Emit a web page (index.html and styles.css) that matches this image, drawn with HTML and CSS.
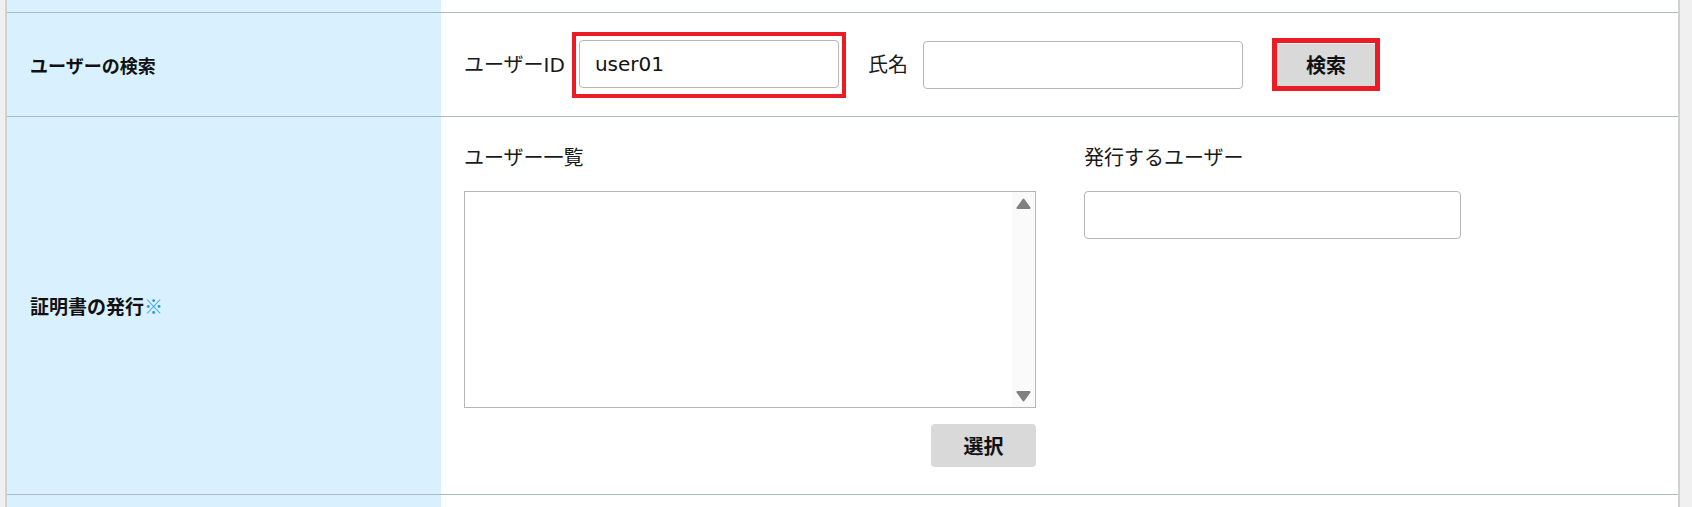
FILE: index.html
```html
<!DOCTYPE html>
<html lang="ja">
<head>
<meta charset="utf-8">
<title>証明書の発行</title>
<link rel="stylesheet" href="styles.css">
</head>
<body>
<div class="page">
  <div class="edge-left"></div>
  <div class="main">
    <div class="row row-top">
      <div class="th"></div>
      <div class="td"></div>
    </div>
    <div class="row row-search">
      <div class="th">ユーザーの検索</div>
      <div class="td search">
        <label class="lbl lbl-id">ユーザーID</label>
        <span class="hl">
          <input class="field field-id" type="text" value="user01">
        </span>
        <label class="lbl lbl-name">氏名</label>
        <input class="field field-name" type="text" value="">
        <button class="btn btn-search">検索</button>
      </div>
    </div>
    <div class="row row-issue">
      <div class="th">証明書の発行<span class="mark">※</span></div>
      <div class="td issue">
        <div class="col col-list">
          <div class="lbl col-title">ユーザー一覧</div>
          <div class="listbox">
            <div class="list-body"></div>
            <div class="list-scroll">
              <svg class="arrow" width="15" height="12" viewBox="0 0 15 12"><path d="M7.5 1.5 L13.6 10 L1.4 10 Z" fill="#808080" stroke="#808080" stroke-width="2" stroke-linejoin="round"/></svg>
              <svg class="arrow" width="15" height="12" viewBox="0 0 15 12"><path d="M7.5 10.5 L13.6 2 L1.4 2 Z" fill="#808080" stroke="#808080" stroke-width="2" stroke-linejoin="round"/></svg>
            </div>
          </div>
          <div class="btn-row">
            <button class="btn btn-select">選択</button>
          </div>
        </div>
        <div class="col col-target">
          <div class="lbl col-title">発行するユーザー</div>
          <input class="field field-target" type="text" value="">
        </div>
      </div>
    </div>
    <div class="row row-bottom">
      <div class="th"></div>
      <div class="td"></div>
    </div>
  </div>
  <div class="edge-right"></div>
</div>
</body>
</html>
```

FILE: styles.css
```css
html, body {
  margin: 0;
  padding: 0;
  height: 507px;
  overflow: hidden;
  background: #ffffff;
}

body {
  font-family: "DejaVu Sans", "Noto Sans CJK JP", sans-serif;
  color: #1a1a1a;
}

.page {
  display: flex;
  height: 507px;
}

.edge-left {
  width: 5px;
  background: #f0f0f0;
  border-right: 2px solid #d2d2d2;
  flex: none;
}

.edge-right {
  width: 12px;
  background: #f0f0f0;
  border-left: 2px solid #d0d0d0;
  flex: none;
}

.main {
  flex: 1;
  display: flex;
  flex-direction: column;
}

.row {
  display: grid;
  grid-template-columns: 434px 1fr;
  border-top: 1px solid #a8bac5;
}

.row-top {
  border-top: none;
  height: 12px;
}

.row-search {
  height: 103px;
}

.row-issue {
  height: 377px;
}

.row-bottom {
  flex: 1;
}

.th {
  background: #d9f1fe;
  display: flex;
  align-items: center;
  padding-left: 23px;
  font-family: "Noto Sans CJK JP", sans-serif;
  font-weight: bold;
  font-size: 18px;
  color: #111;
}

.row-issue .th {
  font-size: 19px;
}

.mark {
  color: #1e9ae6;
  font-weight: bold;
}

.td {
  background: #ffffff;
}

.lbl {
  font-size: 20px;
  line-height: 30px;
  color: #1a1a1a;
}

.search {
  display: flex;
  align-items: center;
  padding-left: 23px;
}

.lbl-id {
  margin-right: 7px;
}

.hl {
  display: inline-flex;
  border: 4px solid #ec1c24;
  padding: 4px 3px 6px 3px;
  margin-top: 1px;
}

.field {
  box-sizing: border-box;
  height: 48px;
  border: 1px solid #b6b6b6;
  border-radius: 4px;
  background: #fff;
  padding: 0 15px;
  font-family: "DejaVu Sans", "Noto Sans CJK JP", sans-serif;
  font-size: 20px;
  color: #111;
  outline: none;
  margin: 0;
}

.field-id {
  width: 260px;
}

.lbl-name {
  margin-left: 22px;
  margin-right: 15px;
}

.field-name {
  width: 320px;
}

.btn {
  font-family: "Noto Sans CJK JP", sans-serif;
  font-weight: bold;
  font-size: 20px;
  color: #111;
  background: #d9d9d9;
  cursor: pointer;
  margin: 0;
  padding: 0;
}

.btn-search {
  box-sizing: border-box;
  margin-left: 29px;
  width: 108px;
  height: 53px;
  border: 5px solid #ec1c24;
  box-shadow: inset 0 1px 0 #f4f4f4;
}

.issue {
  display: flex;
  gap: 48px;
  padding: 26px 0 27px 23px;
}

.col-title {
  margin-bottom: 18px;
}

.col-list {
  width: 572px;
  display: flex;
  flex-direction: column;
}

.listbox {
  box-sizing: border-box;
  height: 217px;
  border: 1px solid #b6b6b6;
  display: flex;
  background: #fff;
}

.list-body {
  flex: 1;
}

.list-scroll {
  width: 23px;
  background: #fafafa;
  display: flex;
  flex-direction: column;
  justify-content: space-between;
  align-items: center;
  padding: 6px 0 5px 0;
}

.arrow {
  display: block;
}

.btn-row {
  display: flex;
  justify-content: flex-end;
  margin-top: 16px;
}

.btn-select {
  width: 105px;
  height: 43px;
  border: none;
  border-radius: 4px;
}

.col-target {
  display: flex;
  flex-direction: column;
}

.field-target {
  width: 377px;
}
```
